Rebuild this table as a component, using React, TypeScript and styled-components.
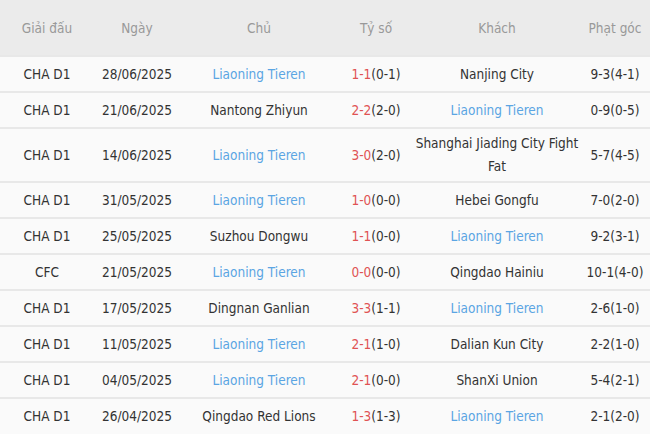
import React, { FC } from 'react';
import styled, { createGlobalStyle } from 'styled-components';

const GlobalStyle = createGlobalStyle`
  html, body {
    margin: 0;
    padding: 0;
    background: #fafafa;
  }
`;

const Table = styled.table`
  width: 650px;
  border-collapse: collapse;
  table-layout: fixed;
  font-family: 'DejaVu Sans Condensed', 'DejaVu Sans', Verdana, sans-serif;
  font-size: 13.5px;
  color: #333;
  background: #fafafa;
`;

const HeadCell = styled.th`
  height: 55px;
  background: #ebebeb;
  color: #999;
  font-weight: normal;
  text-align: center;
  padding: 0;
`;

const Row = styled.tr`
  border-top: 2px solid #e8e8e8;
`;

const Cell = styled.td`
  height: 36px;
  text-align: center;
  vertical-align: middle;
  padding: 3px 0;
  line-height: 23px;
  box-sizing: border-box;
`;

const Team = styled.span<{ $main?: boolean }>`
  color: ${(p) => (p.$main ? '#5ba5e3' : '#333')};
`;

const Full = styled.span`
  color: #e05353;
`;

type Match = {
  league: string;
  date: string;
  home: string;
  score: string;
  half: string;
  away: string;
  corners: string;
};

const MAIN = 'Liaoning Tieren';

const matches: Match[] = [
  { league: 'CHA D1', date: '28/06/2025', home: MAIN, score: '1-1', half: '(0-1)', away: 'Nanjing City', corners: '9-3(4-1)' },
  { league: 'CHA D1', date: '21/06/2025', home: 'Nantong Zhiyun', score: '2-2', half: '(2-0)', away: MAIN, corners: '0-9(0-5)' },
  { league: 'CHA D1', date: '14/06/2025', home: MAIN, score: '3-0', half: '(2-0)', away: 'Shanghai Jiading City Fight Fat', corners: '5-7(4-5)' },
  { league: 'CHA D1', date: '31/05/2025', home: MAIN, score: '1-0', half: '(0-0)', away: 'Hebei Gongfu', corners: '7-0(2-0)' },
  { league: 'CHA D1', date: '25/05/2025', home: 'Suzhou Dongwu', score: '1-1', half: '(0-0)', away: MAIN, corners: '9-2(3-1)' },
  { league: 'CFC', date: '21/05/2025', home: MAIN, score: '0-0', half: '(0-0)', away: 'Qingdao Hainiu', corners: '10-1(4-0)' },
  { league: 'CHA D1', date: '17/05/2025', home: 'Dingnan Ganlian', score: '3-3', half: '(1-1)', away: MAIN, corners: '2-6(1-0)' },
  { league: 'CHA D1', date: '11/05/2025', home: MAIN, score: '2-1', half: '(1-0)', away: 'Dalian Kun City', corners: '2-2(1-0)' },
  { league: 'CHA D1', date: '04/05/2025', home: MAIN, score: '2-1', half: '(0-0)', away: 'ShanXi Union', corners: '5-4(2-1)' },
  { league: 'CHA D1', date: '26/04/2025', home: 'Qingdao Red Lions', score: '1-3', half: '(1-3)', away: MAIN, corners: '2-1(2-0)' },
];

const App: FC = () => (
  <>
    <GlobalStyle />
    <Table>
      <colgroup>
        <col style={{ width: 94 }} />
        <col style={{ width: 86 }} />
        <col style={{ width: 158 }} />
        <col style={{ width: 76 }} />
        <col style={{ width: 166 }} />
        <col style={{ width: 70 }} />
      </colgroup>
      <thead>
        <tr>
          <HeadCell>Giải đấu</HeadCell>
          <HeadCell>Ngày</HeadCell>
          <HeadCell>Chủ</HeadCell>
          <HeadCell>Tỷ số</HeadCell>
          <HeadCell>Khách</HeadCell>
          <HeadCell>Phạt góc</HeadCell>
        </tr>
      </thead>
      <tbody>
        {matches.map((m) => (
          <Row key={m.date + m.home}>
            <Cell>{m.league}</Cell>
            <Cell>{m.date}</Cell>
            <Cell>
              <Team $main={m.home === MAIN}>{m.home}</Team>
            </Cell>
            <Cell>
              <Full>{m.score}</Full>
              {m.half}
            </Cell>
            <Cell>
              <Team $main={m.away === MAIN}>{m.away}</Team>
            </Cell>
            <Cell>{m.corners}</Cell>
          </Row>
        ))}
      </tbody>
    </Table>
  </>
);

export default App;
